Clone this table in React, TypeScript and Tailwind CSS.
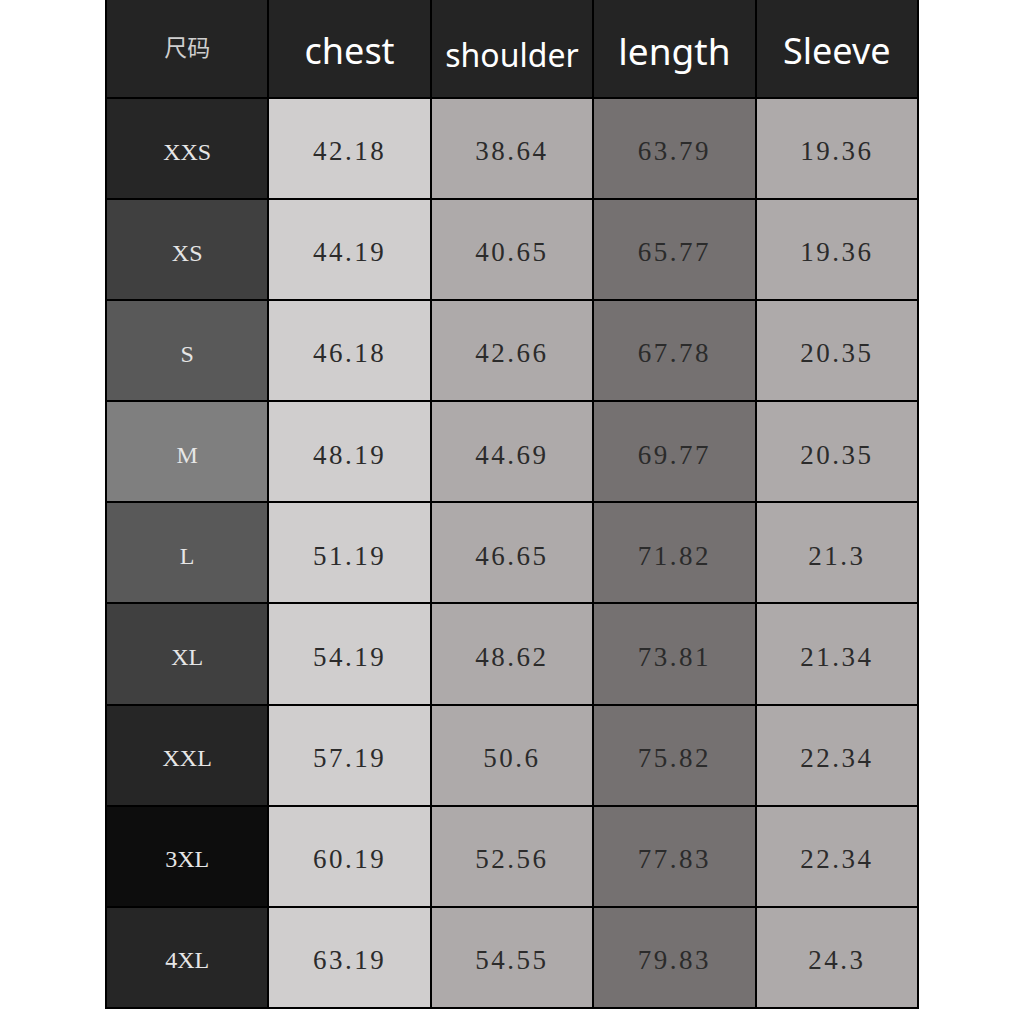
import * as React from "react";

type Row = {
  size: string;
  sizeBg: string;
  values: [string, string, string, string];
};

const rows: Row[] = [
  { size: "XXS", sizeBg: "bg-[#262626]", values: ["42.18", "38.64", "63.79", "19.36"] },
  { size: "XS", sizeBg: "bg-[#404040]", values: ["44.19", "40.65", "65.77", "19.36"] },
  { size: "S", sizeBg: "bg-[#595959]", values: ["46.18", "42.66", "67.78", "20.35"] },
  { size: "M", sizeBg: "bg-[#7f7f7f]", values: ["48.19", "44.69", "69.77", "20.35"] },
  { size: "L", sizeBg: "bg-[#595959]", values: ["51.19", "46.65", "71.82", "21.3"] },
  { size: "XL", sizeBg: "bg-[#404040]", values: ["54.19", "48.62", "73.81", "21.34"] },
  { size: "XXL", sizeBg: "bg-[#262626]", values: ["57.19", "50.6", "75.82", "22.34"] },
  { size: "3XL", sizeBg: "bg-[#0d0d0d]", values: ["60.19", "52.56", "77.83", "22.34"] },
  { size: "4XL", sizeBg: "bg-[#262626]", values: ["63.19", "54.55", "79.83", "24.3"] },
];

const colBg = ["bg-[#d0cece]", "bg-[#aeaaaa]", "bg-[#757171]", "bg-[#aeaaaa]"];

const serif = "font-['Liberation_Serif','Noto_Sans_CJK_SC',serif]";
const sans = "font-['Noto_Sans','Noto_Sans_CJK_SC',sans-serif]";

function HeadCell({ children }: { children: React.ReactNode }) {
  return <div className="flex h-[97px] items-center justify-center bg-[#242424]">{children}</div>;
}

export default function App() {
  return (
    <main className="min-h-[1024px] bg-white">
      <div className="ml-[105px] grid w-[814px] grid-cols-5 gap-[2px] bg-black px-[2px] pb-[2px]">
        <HeadCell>
          <span className="pb-1 font-['Noto_Sans_CJK_SC',serif] text-[23px] text-[#cfcfcf]">尺码</span>
        </HeadCell>
        <HeadCell>
          <span className={`${sans} pt-1 text-[36px] text-white`}>chest</span>
        </HeadCell>
        <HeadCell>
          <span className={`${sans} pt-3 text-[32px] text-white`}>shoulder</span>
        </HeadCell>
        <HeadCell>
          <span className={`${sans} pt-1 text-[37px] text-white`}>length</span>
        </HeadCell>
        <HeadCell>
          <span className={`${sans} pt-1 text-[36px] text-white`}>Sleeve</span>
        </HeadCell>

        {rows.map((r) => (
          <React.Fragment key={r.size}>
            <div className={`flex h-[99.1px] items-center justify-center ${r.sizeBg}`}>
              <span className={`${serif} pt-[6px] text-[24px] text-[#e6e6e6]`}>{r.size}</span>
            </div>
            {r.values.map((v, i) => (
              <div key={i} className={`flex h-[99.1px] items-center justify-center ${colBg[i]}`}>
                <span className={`${serif} pt-[6px] text-[27px] tracking-[2.5px] text-[#2b2b2b]`}>{v}</span>
              </div>
            ))}
          </React.Fragment>
        ))}
      </div>
    </main>
  );
}
